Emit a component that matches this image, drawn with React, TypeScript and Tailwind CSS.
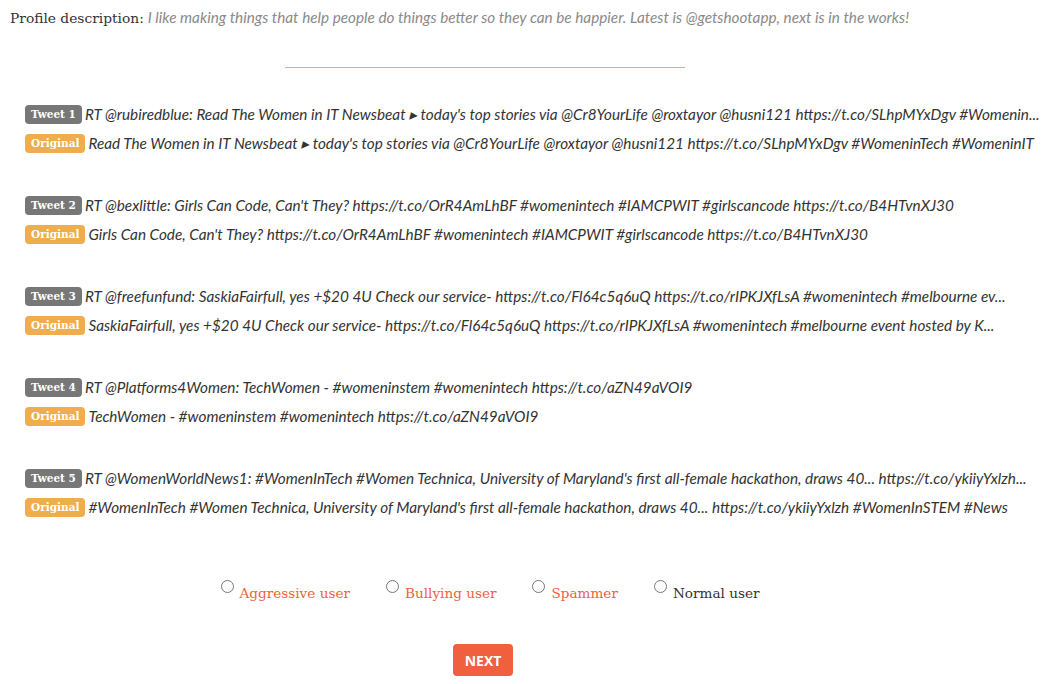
import { useState } from 'react';

// tweets shown for the user being labelled
const tweets = [
  {
    rt: "RT @rubiredblue: Read The Women in IT Newsbeat ▸ today's top stories via @Cr8YourLife @roxtayor @husni121 https://t.co/SLhpMYxDgv #Womenin...",
    original: "Read The Women in IT Newsbeat ▸ today's top stories via @Cr8YourLife @roxtayor @husni121 https://t.co/SLhpMYxDgv #WomeninTech #WomeninIT",
  },
  {
    rt: "RT @bexlittle: Girls Can Code, Can't They? https://t.co/OrR4AmLhBF #womenintech #IAMCPWIT #girlscancode https://t.co/B4HTvnXJ30",
    original: "Girls Can Code, Can't They? https://t.co/OrR4AmLhBF #womenintech #IAMCPWIT #girlscancode https://t.co/B4HTvnXJ30",
  },
  {
    rt: "RT @freefunfund: SaskiaFairfull, yes +$20 4U Check our service- https://t.co/Fl64c5q6uQ https://t.co/rIPKJXfLsA #womenintech #melbourne ev...",
    original: "SaskiaFairfull, yes +$20 4U Check our service- https://t.co/Fl64c5q6uQ https://t.co/rIPKJXfLsA #womenintech #melbourne event hosted by K...",
  },
  {
    rt: "RT @Platforms4Women: TechWomen - #womeninstem #womenintech https://t.co/aZN49aVOI9",
    original: "TechWomen - #womeninstem #womenintech https://t.co/aZN49aVOI9",
  },
  {
    rt: "RT @WomenWorldNews1: #WomenInTech #Women Technica, University of Maryland's first all-female hackathon, draws 40... https://t.co/ykiiyYxlzh...",
    original: "#WomenInTech #Women Technica, University of Maryland's first all-female hackathon, draws 40... https://t.co/ykiiyYxlzh #WomenInSTEM #News",
  },
];

const options = [
  { label: "Aggressive user", color: "text-[#f0603f]" },
  { label: "Bullying user", color: "text-[#f0603f]" },
  { label: "Spammer", color: "text-[#f0603f]" },
  { label: "Normal user", color: "text-[#333]" },
];

const serif = "font-['DejaVu_Serif',serif]";

const Badge = ({ text, color }: { text: string; color: string }) => (
  <span className={`${serif} ${color} inline-flex h-[19px] shrink-0 items-center whitespace-nowrap rounded-[4px] px-[6px] text-[10.5px] font-bold text-white`}>
    {text}
  </span>
);

export default function App() {
  const [choice, setChoice] = useState<string | null>(null);

  return (
    <div className="min-h-[684px] w-[1060px] bg-white text-[#333]">
      <div className="w-[970px] px-[10px] pt-[6px]">
        <p className="whitespace-nowrap text-[15px] leading-[22px]">
          <span className={`${serif} text-[13.8px]`}>Profile description:</span>{' '}
          <span className="font-['Lato',sans-serif] text-[15.3px] italic text-[#8a8a8a]">
            I like making things that help people do things better so they can be happier. Latest is @getshootapp, next is in the works!
          </span>
        </p>

        <div className="mx-auto mt-[38px] h-px w-[400px] bg-[#f0ad4e]" />

        <div className="mt-[37px] flex flex-col gap-[43px] pl-[15px]">
          {tweets.map((t, i) => (
            <div key={i} className="flex flex-col gap-[10px]">
              <div className="flex h-[19px] items-center gap-[3px]">
                <Badge text={`Tweet ${i + 1}`} color="bg-[#777]" />
                <span className="whitespace-nowrap font-['Lato',sans-serif] text-[15.3px] italic text-[#333]">{t.rt}</span>
              </div>
              <div className="flex h-[19px] items-center gap-[3px]">
                <Badge text="Original" color="bg-[#f0ad4e]" />
                <span className="whitespace-nowrap font-['Lato',sans-serif] text-[15.3px] italic text-[#333]">{t.original}</span>
              </div>
            </div>
          ))}
        </div>

        <div className="mt-[62px] flex justify-center gap-[36px] pl-[10px]">
          {options.map((o) => (
            <label key={o.label} className={`${serif} ${o.color} flex cursor-pointer items-start gap-[6px] text-[13.6px]`}>
              <input
                type="radio"
                name="label"
                className="mt-[1px] h-[13px] w-[13px]"
                checked={choice === o.label}
                onChange={() => setChoice(o.label)}
              />
              <span className="mt-[4px]">{o.label}</span>
            </label>
          ))}
        </div>

        <div className="mt-[41px] flex justify-center pr-[4px]">
          <button className="h-[32px] w-[60px] rounded-[4px] bg-[#f0603f] font-['Open_Sans',sans-serif] text-[14px] font-bold text-white">
            NEXT
          </button>
        </div>
      </div>
    </div>
  );
}
